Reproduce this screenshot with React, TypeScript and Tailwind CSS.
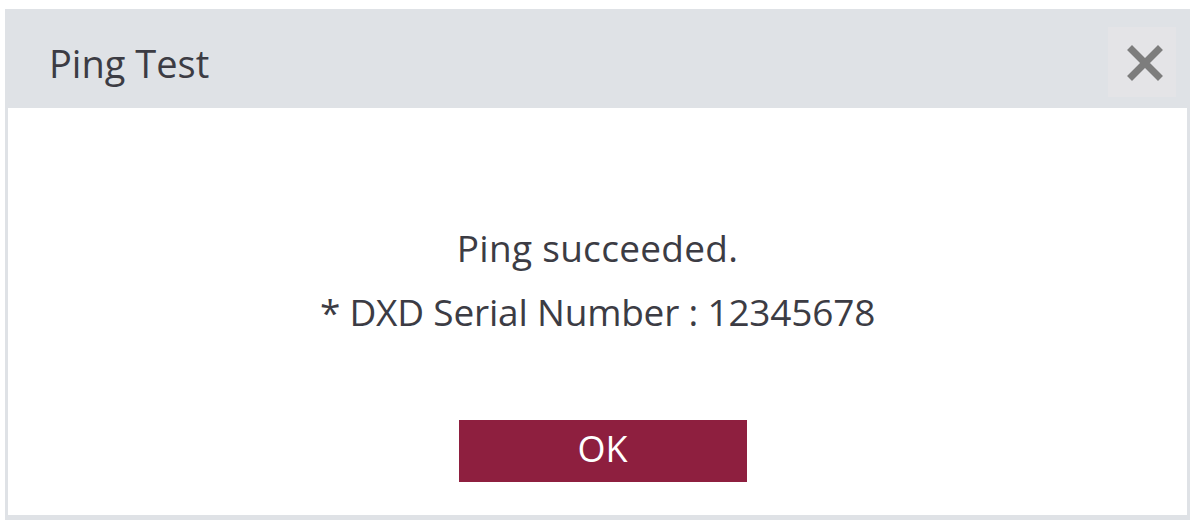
import React from 'react';

const font = { fontFamily: '"Open Sans", "Noto Sans", sans-serif' };

function CloseIcon() {
  return (
    <svg width="36" height="36" viewBox="0 0 36 36" aria-hidden="true">
      <path d="M5 5 L31 31 M31 5 L5 31" stroke="#7d7d7d" strokeWidth="7" strokeLinecap="square" />
    </svg>
  );
}

export default function App() {
  return (
    <div className="h-[528px] w-[1200px] bg-white pl-[5px] pt-[9px]" style={font}>
      <div className="flex h-[511px] w-[1185px] flex-col bg-[#dfe2e6] px-[3px] pb-[5px]">
        <div className="flex h-[99px] shrink-0 items-center justify-between">
          <h1 className="pl-[41px] pt-[8px] text-[38px] leading-none text-[#3c3c44]">Ping Test</h1>
          <button className="mr-[11px] mt-[6px] flex h-[70px] w-[68px] items-center justify-center bg-[#e4e4e7] pl-[6px] pt-[2px]">
            <CloseIcon />
          </button>
        </div>
        <main className="flex flex-1 flex-col items-center bg-white pt-[108px]">
          <p className="text-[37px] leading-[64px] text-[#3c3c44] tracking-[0.3px]">Ping succeeded.</p>
          <p className="text-[37px] leading-[64px] text-[#3c3c44] tracking-[-0.2px]">* DXD Serial Number : 12345678</p>
          <button className="ml-[10px] mt-[76px] h-[62px] w-[288px] bg-[#8e1f3f] pb-[4px] text-[36px] leading-none text-white">
            OK
          </button>
        </main>
      </div>
    </div>
  );
}
